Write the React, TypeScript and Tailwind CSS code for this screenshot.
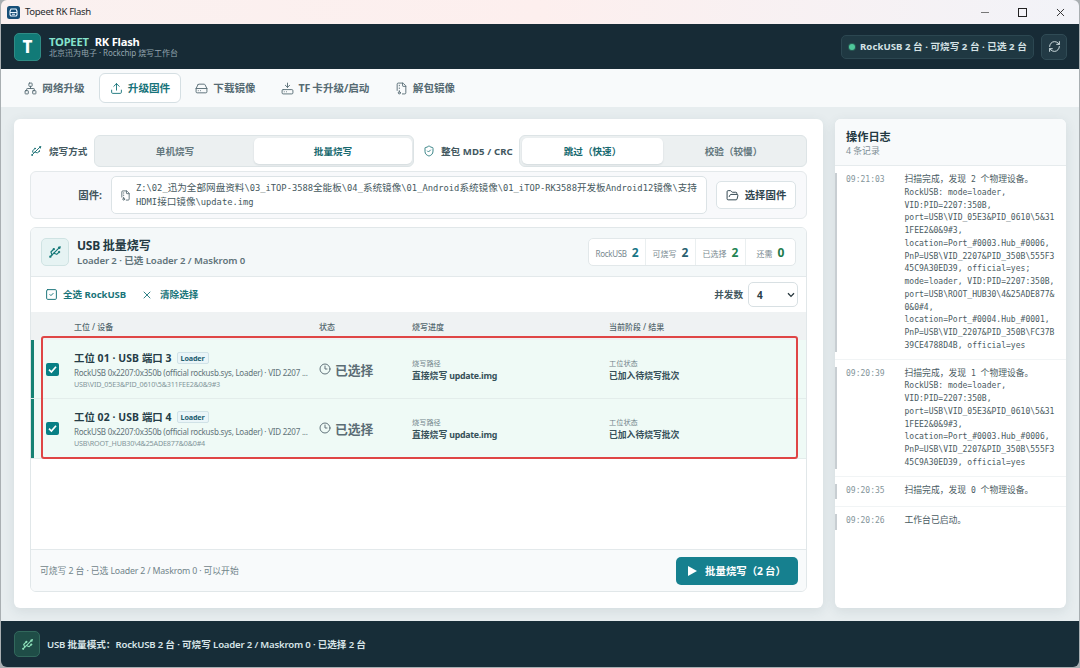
import type { ReactNode } from 'react'
import {
  Clock3,
  FileArchive,
  FolderOpen,
  HardDrive,
  HardDriveDownload,
  Network,
  RefreshCw,
  ShieldCheck,
  SquareCheck,
  Upload,
  Usb,
  X,
} from 'lucide-react'
import clsx from 'clsx'

function Mixed({ text, latin = 'tracking-[-0.03em]' }: { text: string; latin?: string }) {
  const parts = text.split(/([\u3000-\u30ff\u4e00-\u9fff\uff00-\uffef]+)/)
  return (
    <>
      {parts.map((part, i) => (i % 2 === 0 ? <span key={i} className={latin}>{part}</span> : part))}
    </>
  )
}

const MONO = 'text-[0.914em]'

const tabs = [
  { label: '网络升级', icon: Network, width: 'w-[83px]' },
  { label: '升级固件', icon: Upload, width: 'w-[82px]', active: true },
  { label: '下载镜像', icon: HardDrive, width: 'w-[83px]' },
  { label: 'TF 卡升级/启动', icon: HardDriveDownload, width: 'w-[110px]' },
  { label: '解包镜像', icon: FileArchive, width: 'w-[84px]' },
]

const stats = [
  { label: 'RockUSB', value: '2', color: 'text-[#177585]', width: 'w-[57px]' },
  { label: '可烧写', value: '2', color: 'text-[#28606f]', width: 'w-[50px]' },
  { label: '已选择', value: '2', color: 'text-[#218352]', width: 'w-[50px]' },
  { label: '还需', value: '0', color: 'text-[#217a4b]', width: 'w-[49px]' },
]

const devices = [
  { name: '工位 01 · USB 端口 3', path: 'USB\\VID_05E3&PID_0610\\5&311FEE2&0&9#3' },
  { name: '工位 02 · USB 端口 4', path: 'USB\\ROOT_HUB30\\4&25ADE877&0&0#4' },
]

const logs = [
  {
    time: '09:21:03',
    lines: [
      '扫描完成，发现 2 个物理设备。',
      'RockUSB: mode=loader,',
      'VID:PID=2207:350B,',
      'port=USB\\VID_05E3&PID_0610\\5&31',
      '1FEE2&0&9#3,',
      'location=Port_#0003.Hub_#0006,',
      'PnP=USB\\VID_2207&PID_350B\\555F3',
      '45C9A30ED39, official=yes;',
      'mode=loader, VID:PID=2207:350B,',
      'port=USB\\ROOT_HUB30\\4&25ADE877&',
      '0&0#4,',
      'location=Port_#0004.Hub_#0001,',
      'PnP=USB\\VID_2207&PID_350B\\FC37B',
      '39CE4788D4B, official=yes',
    ],
  },
  {
    time: '09:20:39',
    lines: [
      '扫描完成，发现 1 个物理设备。',
      'RockUSB: mode=loader,',
      'VID:PID=2207:350B,',
      'port=USB\\VID_05E3&PID_0610\\5&31',
      '1FEE2&0&9#3,',
      'location=Port_#0003.Hub_#0006,',
      'PnP=USB\\VID_2207&PID_350B\\555F3',
      '45C9A30ED39, official=yes',
    ],
  },
  { time: '09:20:35', lines: ['扫描完成，发现 0 个物理设备。'] },
  { time: '09:20:26', lines: ['工作台已启动。'] },
]

function TitleBar() {
  return (
    <div className="flex h-6 shrink-0 items-center bg-gradient-to-r from-[#faf1f0] via-[#fdefee] to-[#f2f3f8] pl-1.5">
      <svg width="13" height="13" viewBox="0 0 13 13">
        <rect width="13" height="13" rx="2.5" fill="#174f78" />
        <path d="M4 3h5l1 2.2v3.6L9.2 10H3.800L3 8.800V5.200z M3.200 6.500h6.600 M5 8.300h3" fill="none" stroke="#eaf6ff" strokeWidth="1.100" />
      </svg>
      <span className="ml-[5px] pt-px text-[9.6px] tracking-[-0.035em] text-[#292b2e]">Topeet RK Flash</span>
      <div className="ml-auto flex items-center pr-[12px] text-[#333]">
        <span className="h-px w-2 bg-[#777]" />
        <span className="ml-[29px] h-[9px] w-[9px] border border-[#222]" />
        <X className="ml-[27px]" size={13} strokeWidth={1.8} />
      </div>
    </div>
  )
}

function Header() {
  return (
    <header className="flex h-[45px] shrink-0 items-center bg-[#172b36] pl-[13px] pr-3">
      <div className="flex h-7 w-[27px] items-center justify-center rounded-[5px] border border-[#2f8c85] bg-[#117a77] text-[17px] font-extrabold text-white">
        T
      </div>
      <div className="ml-2">
        <div className="text-[11.2px] font-bold leading-[13px] tracking-[-0.02em] text-white">
          <span className="text-[#86e3cd]">TOPEET</span>
          <span className="ml-1.5">RK Flash</span>
        </div>
        <div className="text-[8px] leading-[10px] text-[#93a5ae]"><Mixed text="北京迅为电子 · Rockchip 烧写工作台" latin="tracking-[-0.01em]" /></div>
      </div>
      <div className="ml-auto flex h-6 w-[193px] items-center rounded-[5px] border border-[#2c4751] bg-[#1f3842] pl-[7px] text-[9.6px] font-bold text-[#d5e2e5]">
        <span className="mr-[5px] h-1.5 w-1.5 shrink-0 rounded-full bg-[#4fc79a] ring-1 ring-[#285b55]" />
        <span className="whitespace-nowrap pt-px"><Mixed text="RockUSB 2 台 · 可烧写 2 台 · 已选 2 台" latin="tracking-[0.005em]" /></span>
      </div>
      <div className="ml-[7px] flex h-[26px] w-[26px] items-center justify-center rounded-[5px] border border-[#304b55] bg-[#223a45] text-[#d5e2e5]">
        <RefreshCw size={13} strokeWidth={1.8} />
      </div>
    </header>
  )
}

function Tabs() {
  return (
    <nav className="flex h-[38px] shrink-0 items-center gap-[3px] bg-[#f8fafb] pl-3">
      {tabs.map(({ label, icon: Icon, width, active }) => (
        <div
          key={label}
          className={clsx(
            'flex h-[30px] shrink-0 items-center justify-center gap-[5px] whitespace-nowrap rounded-[6px] border text-[10.6px] font-bold',
            width,
            active ? 'border-[#d5dfe3] bg-white text-[#17737a]' : 'border-transparent text-[#566b73]',
          )}
        >
          <Icon size={13} strokeWidth={1.7} className="shrink-0" />
          <span className="pt-0.5"><Mixed text={label} /></span>
        </div>
      ))}
    </nav>
  )
}

function Segment({ children, active, className }: { children: ReactNode; active?: boolean; className?: string }) {
  return (
    <div
      className={clsx(
        'flex h-[26px] items-center justify-center rounded-[5px] pt-0.5',
        active ? 'bg-white text-[#17696f] shadow-[0_1px_2px_rgba(30,60,70,0.12)]' : 'text-[#63777d]',
        className,
      )}
    >
      {children}
    </div>
  )
}

function ModeRow() {
  return (
    <div className="flex h-8 items-center text-[9.6px] font-bold">
      <div className="flex w-[64px] items-center gap-[7px] whitespace-nowrap text-[#43585f]">
        <Usb size={12} strokeWidth={2} className="shrink-0 text-[#27787c]" />
        <span className="pt-0.5">烧写方式</span>
      </div>
      <div className="flex h-8 w-[320px] items-center rounded-[6px] border border-[#dde4e6] bg-[#ecf0f1] px-px">
        <Segment className="w-[158px]">单机烧写</Segment>
        <Segment active className="w-[158px]">批量烧写</Segment>
      </div>
      <div className="ml-[9px] flex w-[96px] items-center gap-1.5 whitespace-nowrap text-[#43585f]">
        <ShieldCheck size={12} strokeWidth={1.8} className="shrink-0 text-[#27787c]" />
        <span className="pt-0.5"><Mixed text="整包 MD5 / CRC" latin="tracking-[0.01em]" /></span>
      </div>
      <div className="flex h-8 flex-1 items-center rounded-[6px] border border-[#dde4e6] bg-[#ecf0f1] px-[2px]">
        <Segment active className="w-[141px]">跳过（快速）</Segment>
        <Segment className="flex-1">校验（较慢）</Segment>
      </div>
    </div>
  )
}

function FirmwareRow() {
  return (
    <div className="mt-1 flex h-12 items-center rounded-[6px] border border-[#e4e9eb] bg-[#f8f9fb] pr-[10px]">
      <div className="w-[80px] pr-[9px] pt-0.5 text-right text-[10.4px] font-bold text-[#40545c]">固件:</div>
      <div className="flex h-[38px] flex-1 items-center rounded-[5px] border border-[#dce3e6] bg-white pl-2">
        <FileArchive size={11} strokeWidth={1.9} className="shrink-0 text-[#52666e]" />
        <div className="ml-[5px] whitespace-nowrap font-['DejaVu_Sans_Mono','Noto_Sans_CJK_SC',monospace] text-[9.6px] leading-[13px] text-[#465960]">
          <div><Mixed text="Z:\02_迅为全部网盘资料\03_iTOP-3588全能板\04_系统镜像\01_Android系统镜像\01_iTOP-RK3588开发板Android12镜像\支持" latin={MONO} /></div>
          <div><Mixed text="HDMI接口镜像\update.img" latin={MONO} /></div>
        </div>
      </div>
      <div className="ml-[9px] flex h-7 w-[80px] items-center justify-center gap-1.5 rounded-[5px] border border-[#dbe3e6] bg-white text-[10.4px] font-bold text-[#2f454e]">
        <FolderOpen size={13} strokeWidth={1.8} />
        <span className="pt-0.5">选择固件</span>
      </div>
    </div>
  )
}

function BatchHeader() {
  return (
    <div className="flex h-[49px] shrink-0 items-center border-b border-[#e3e9eb] bg-[#f4f8f9] pl-[10px] pr-[10px]">
      <div className="flex h-7 w-7 items-center justify-center rounded-[5px] border border-[#cfe3e3] bg-[#e6f3f3] text-[#177a7a]">
        <Usb size={14} strokeWidth={2} />
      </div>
      <div className="ml-2 pt-0.5">
        <div className="text-[12px] font-bold leading-[16px] text-[#233942]"><Mixed text="USB 批量烧写" latin="tracking-[-0.02em]" /></div>
        <div className="text-[9.6px] font-semibold leading-[14px] text-[#5f7379]"><Mixed text="Loader 2 · 已选 Loader 2 / Maskrom 0" latin="tracking-[-0.01em]" /></div>
      </div>
      <div className="ml-auto flex h-7 overflow-hidden rounded-[5px] border border-[#e2e8ea] bg-white">
        {stats.map(({ label, value, color, width }) => (
          <div key={label} className={clsx('flex items-center justify-center gap-[5px] border-r border-[#eaeff0] text-[8px] text-[#78898f] last:border-r-0', width)}>
            <span className="pt-1"><Mixed text={label} latin="tracking-[-0.04em]" /></span>
            <span className={clsx('pt-0.5 text-[12px] font-bold', color)}>{value}</span>
          </div>
        ))}
      </div>
    </div>
  )
}

function BatchToolbar() {
  return (
    <div className="flex h-[35px] shrink-0 items-center bg-white pl-[14px] pr-2 text-[9.6px] font-bold text-[#197479]">
      <SquareCheck size={13} strokeWidth={1.8} />
      <span className="ml-[5px] pt-0.5"><Mixed text="全选 RockUSB" latin="tracking-[-0.01em]" /></span>
      <X size={12} strokeWidth={1.8} className="ml-[15px]" />
      <span className="ml-[7px] pt-0.5">清除选择</span>
      <span className="ml-auto pt-0.5 text-[#43585f]">并发数</span>
      <div className="ml-[5px] flex h-[25px] w-[50px] items-center justify-between rounded-[5px] border border-[#d8e0e3] pl-2 pr-[2px] text-[10px] text-[#2b4048]">
        <span className="pt-0.5">4</span>
        <svg width="8" height="6" viewBox="0 0 8 6" fill="none" stroke="#26363c" strokeWidth="1.300">
          <path d="M1 1.200 4 4.400 7 1.200" />
        </svg>
      </div>
    </div>
  )
}

const COLUMNS = 'grid grid-cols-[43px_245px_93px_197px_1fr]'

function Field({ label, value }: { label: string; value: string }) {
  return (
    <div className="pt-[3px]">
      <div className="text-[7.2px] leading-[11px] text-[#71848a]">{label}</div>
      <div className="text-[8.8px] font-bold leading-[14px] text-[#365059]"><Mixed text={value} latin="tracking-[-0.03em]" /></div>
    </div>
  )
}

function DeviceTable() {
  return (
    <div className="flex-1 bg-white">
      <div className={clsx(COLUMNS, 'h-[28px] items-center bg-[#eff2f3] pt-px text-[8px] font-medium text-[#53676e]')}>
        <span />
        <span>工位 / 设备</span>
        <span>状态</span>
        <span>烧写进度</span>
        <span>当前阶段 / 结果</span>
      </div>
      <div className="relative">
        {devices.map(({ name, path }) => (
          <div key={name} className={clsx(COLUMNS, 'h-[59.25px] items-center border-b border-[#e3edeb] bg-[#effaf6] shadow-[inset_3px_0_0_#158273]')}>
            <div className="ml-[15px] mt-px flex h-[13px] w-[13px] items-center justify-center rounded-[2px] bg-[#087f85]">
              <svg width="9" height="9" viewBox="0 0 9 9" fill="none" stroke="#fff" strokeWidth="1.700">
                <path d="M1 4.700 3.400 7 8 1.700" />
              </svg>
            </div>
            <div className="min-w-0 whitespace-nowrap pt-0.5">
              <div className="flex items-center">
                <span className="text-[10.4px] font-bold leading-[15px] text-[#243c46]"><Mixed text={name} latin="tracking-[0.01em]" /></span>
                <span className="ml-[5px] flex h-3 items-center rounded-[2px] border border-[#d0e2e7] bg-[#eaf5f8] px-[3px] text-[7.2px] font-bold tracking-[-0.02em] text-[#215d70]">Loader</span>
              </div>
              <div className="text-[8px] leading-[13px] tracking-[-0.028em] text-[#5f7379]">RockUSB 0x2207:0x350b (official rockusb.sys, Loader) · VID 2207 ...</div>
              <div className="text-[7.2px] leading-[11px] tracking-[-0.025em] text-[#82959a]">{path}</div>
            </div>
            <div className="flex items-center gap-[4px] text-[12.8px] font-semibold text-[#5b6d75]">
              <Clock3 size={12} strokeWidth={1.9} />
              <span className="pt-0.5">已选择</span>
            </div>
            <Field label="烧写路径" value="直接烧写 update.img" />
            <Field label="工位状态" value="已加入待烧写批次" />
          </div>
        ))}
        <div className="absolute -top-1 bottom-0 left-[10px] w-[757px] rounded-[3px] border-2 border-[#df4545]" />
      </div>
    </div>
  )
}

function FlashPanel() {
  return (
    <section className="flex w-[809px] flex-col rounded-[6px] bg-white px-4 pb-4 pt-4 shadow-[0_3px_12px_rgba(40,70,80,0.10)]">
      <ModeRow />
      <FirmwareRow />
      <div className="mt-2 flex flex-1 flex-col overflow-hidden rounded-[6px] border border-[#e1e7e9]">
        <BatchHeader />
        <BatchToolbar />
        <DeviceTable />
        <div className="flex h-[42px] shrink-0 items-center border-t border-[#e3e9eb] bg-[#f8fafb] pl-[9px] pr-2 text-[8.8px] text-[#71848a]">
          <span className="pt-[3px]"><Mixed text="可烧写 2 台 · 已选 Loader 2 / Maskrom 0 · 可以开始" latin="tracking-[-0.02em]" /></span>
          <div className="ml-auto flex h-7 w-[122px] items-center justify-center gap-2 rounded-[5px] bg-[#16808f] text-[10.4px] font-bold text-white">
            <svg width="9" height="10" viewBox="0 0 9 10" fill="#fff">
              <path d="M0 0 9 5 0 10z" />
            </svg>
            <span className="pt-0.5"><Mixed text="批量烧写（2 台）" /></span>
          </div>
        </div>
      </div>
    </section>
  )
}

function LogPanel() {
  return (
    <aside className="flex w-[231px] flex-col overflow-hidden rounded-[6px] bg-white shadow-[0_3px_12px_rgba(40,70,80,0.10)]">
      <div className="h-[47px] shrink-0 border-b border-[#e6ebed] bg-[#f8fafb] pl-[11px] pt-[10px]">
        <div className="text-[11.2px] font-bold leading-[16px] text-[#233942]">操作日志</div>
        <div className="text-[8.8px] leading-[13px] text-[#7d8e94]">4 条记录</div>
      </div>
      <div className="font-['DejaVu_Sans_Mono','Noto_Sans_CJK_SC',monospace] text-[8.8px] leading-[12.75px]">
        {logs.map(({ time, lines }) => (
          <div key={time} className="border-b border-[#f1f4f5] py-[7px] last:border-b-0">
            <div className="flex min-h-[15.5px] border-l-2 border-[#c8ced2] pl-[9px]">
              <span className="w-[58.5px] shrink-0 text-[#85959b]"><Mixed text={time} latin={MONO} /></span>
              <div className="whitespace-nowrap text-[#4a5b62]">
                {lines.map((line) => (
                  <div key={line} className="h-[12.75px]"><Mixed text={line} latin={MONO} /></div>
                ))}
              </div>
            </div>
          </div>
        ))}
      </div>
    </aside>
  )
}

export default function App() {
  return (
    <div className="h-[668px] w-[1080px] overflow-hidden bg-[#a9afb2] px-px pb-px font-['Noto_Sans','Noto_Sans_CJK_SC',sans-serif]">
      <div className="flex h-full flex-col overflow-hidden rounded-[6px]">
        <TitleBar />
        <Header />
        <Tabs />
        <main className="flex flex-1 gap-3 bg-[#e7edef] px-[13px] pb-[13px] pt-3">
          <FlashPanel />
          <LogPanel />
        </main>
        <footer className="flex h-[46px] shrink-0 items-center bg-[#172d38] pl-[13px] text-[9.6px] font-semibold text-[#d8e5e8]">
          <div className="mr-[7px] flex h-[26px] w-[26px] items-center justify-center rounded-[5px] border border-[#32685c] bg-[#1f4d47] text-[#8de0b9]">
            <Usb size={13} strokeWidth={2} />
          </div>
          <span className="pt-0.5"><Mixed text="USB 批量模式：RockUSB 2 台 · 可烧写 Loader 2 / Maskrom 0 · 已选择 2 台" latin="tracking-[-0.02em]" /></span>
        </footer>
      </div>
    </div>
  )
}
